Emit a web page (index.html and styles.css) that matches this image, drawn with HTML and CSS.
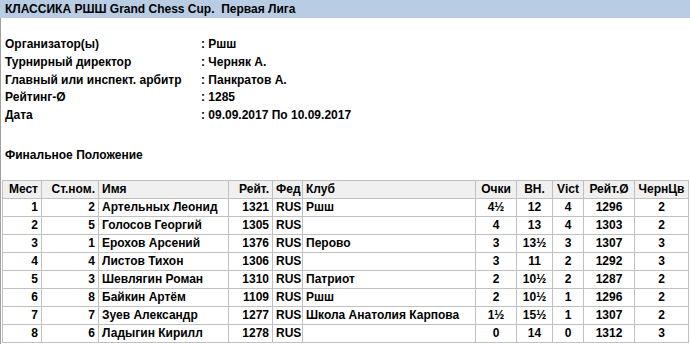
FILE: index.html
```html
<!DOCTYPE html>
<html lang="ru">
<head>
<meta charset="utf-8">
<title>КЛАССИКА РШШ Grand Chess Cup. Первая Лига</title>
<link rel="stylesheet" href="styles.css">
</head>
<body>
<div class="title">КЛАССИКА РШШ Grand Chess Cup.&nbsp; Первая Лига</div>
<div class="page">
  <div class="info">
    <div>Организатор(ы)</div><div>: Ршш</div>
    <div>Турнирный директор</div><div>: Черняк А.</div>
    <div>Главный или инспект. арбитр</div><div>: Панкратов А.</div>
    <div>Рейтинг-Ø</div><div>: 1285</div>
    <div>Дата</div><div>: 09.09.2017 По 10.09.2017</div>
  </div>
  <div class="heading">Финальное Положение</div>
  <table class="standings">
    <colgroup>
      <col class="c-place"><col class="c-start"><col class="c-name"><col class="c-rtg"><col class="c-fed"><col class="c-club"><col class="c-pts"><col class="c-bh"><col class="c-vict"><col class="c-avg"><col class="c-black">
    </colgroup>
    <thead>
      <tr>
        <th class="r">Мест</th><th class="r">Ст.ном.</th><th class="l">Имя</th><th class="r">Рейт.</th><th class="l">Фед</th><th class="l">Клуб</th><th>Очки</th><th>ВН.</th><th>Vict</th><th>Рейт.Ø</th><th>ЧернЦв</th>
      </tr>
    </thead>
    <tbody>
      <tr><td class="r">1</td><td class="r">2</td><td class="l">Артельных Леонид</td><td class="r">1321</td><td class="l">RUS</td><td class="l">Ршш</td><td>4½</td><td>12</td><td>4</td><td>1296</td><td>2</td></tr>
      <tr><td class="r">2</td><td class="r">5</td><td class="l">Голосов Георгий</td><td class="r">1305</td><td class="l">RUS</td><td class="l"></td><td>4</td><td>13</td><td>4</td><td>1303</td><td>2</td></tr>
      <tr><td class="r">3</td><td class="r">1</td><td class="l">Ерохов Арсений</td><td class="r">1376</td><td class="l">RUS</td><td class="l">Перово</td><td>3</td><td>13½</td><td>3</td><td>1307</td><td>3</td></tr>
      <tr><td class="r">4</td><td class="r">4</td><td class="l">Листов Тихон</td><td class="r">1306</td><td class="l">RUS</td><td class="l"></td><td>3</td><td>11</td><td>2</td><td>1292</td><td>3</td></tr>
      <tr><td class="r">5</td><td class="r">3</td><td class="l">Шевлягин Роман</td><td class="r">1310</td><td class="l">RUS</td><td class="l">Патриот</td><td>2</td><td>10½</td><td>2</td><td>1287</td><td>2</td></tr>
      <tr><td class="r">6</td><td class="r">8</td><td class="l">Байкин Артём</td><td class="r">1109</td><td class="l">RUS</td><td class="l">Ршш</td><td>2</td><td>10½</td><td>1</td><td>1296</td><td>2</td></tr>
      <tr><td class="r">7</td><td class="r">7</td><td class="l">Зуев Александр</td><td class="r">1277</td><td class="l">RUS</td><td class="l">Школа Анатолия Карпова</td><td>1½</td><td>15½</td><td>1</td><td>1307</td><td>2</td></tr>
      <tr><td class="r">8</td><td class="r">6</td><td class="l">Ладыгин Кирилл</td><td class="r">1278</td><td class="l">RUS</td><td class="l"></td><td>0</td><td>14</td><td>0</td><td>1312</td><td>3</td></tr>
    </tbody>
  </table>
</div>
</body>
</html>
```
FILE: styles.css
```css
html, body {
  margin: 0;
  padding: 0;
  background: #ffffff;
}

body {
  font-family: "Liberation Sans", Arial, sans-serif;
  font-weight: bold;
  font-size: 12px;
  color: #000000;
}

.title {
  background: #b8cce4;
  height: 18px;
  line-height: 18px;
  padding-left: 5px;
  white-space: nowrap;
}

.page {
  border-left: 1px solid #a0a0a0;
  min-height: 326px;
  box-sizing: border-box;
}

.info {
  display: grid;
  grid-template-columns: 196px auto;
  padding-left: 4px;
  padding-top: 18px;
  line-height: 17.75px;
}

.heading {
  margin-top: 21px;
  padding-left: 4px;
  line-height: 18px;
}

.standings {
  margin-top: 16px;
  margin-left: 1px;
  border-collapse: collapse;
  table-layout: fixed;
  width: 687px;
}

.standings th,
.standings td {
  border: 1px solid #c0c0c0;
  padding: 0 3px;
  height: 17px;
  line-height: 17px;
  text-align: center;
  white-space: nowrap;
  overflow: hidden;
}

.standings th {
  background: #f0f0f0;
  font-weight: bold;
}

.standings .r { text-align: right; }
.standings .l { text-align: left; }

.c-place { width: 39px; }
.c-start { width: 57px; }
.c-name { width: 130px; }
.c-rtg { width: 44px; }
.c-fed { width: 30px; }
.c-club { width: 173px; }
.c-pts { width: 41px; }
.c-bh { width: 36px; }
.c-vict { width: 31px; }
.c-avg { width: 51px; }
.c-black { width: 54px; }
```
